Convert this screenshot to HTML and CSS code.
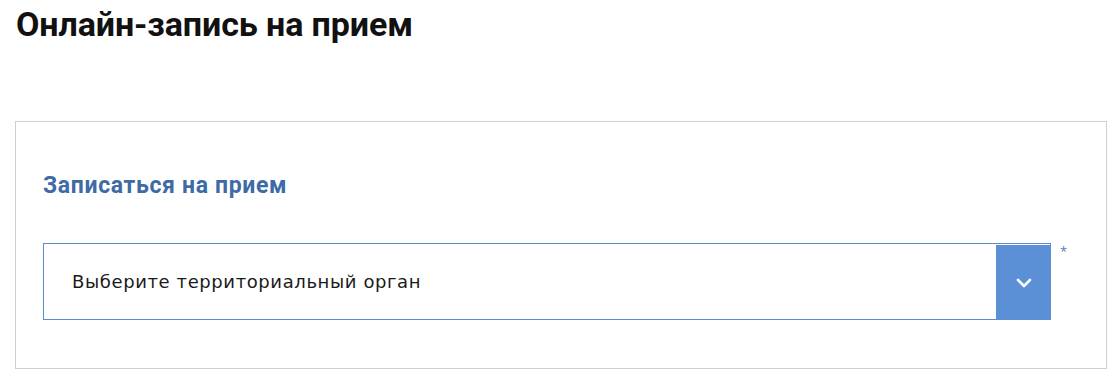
FILE: index.html
```html
<!DOCTYPE html>
<html lang="ru">
<head>
<meta charset="utf-8">
<link rel="stylesheet" href="styles.css">
</head>
<body>
<div class="page">
  <h1 class="title">Онлайн-запись на прием</h1>
  <section class="card">
    <h2 class="subtitle">Записаться на прием</h2>
    <div class="field">
      <div class="select">
        <span class="select-text">Выберите территориальный орган</span>
        <span class="select-btn">
          <svg width="16" height="10" viewBox="0 0 16 10"><path d="M2 2 L8 8 L14 2" fill="none" stroke="#fff" stroke-width="2.6" stroke-linecap="round" stroke-linejoin="round"/></svg>
        </span>
      </div>
      <span class="req">*</span>
    </div>
  </section>
</div>
</body>
</html>
```
FILE: styles.css
```css
html, body { margin: 0; padding: 0; background: #fff; }
.page {
  padding: 0 9px 0 15px;
  font-family: "Open Sans", "DejaVu Sans", sans-serif;
}
.title {
  margin: 0;
  padding-top: 3px;
  font-family: "Roboto", "Liberation Sans", sans-serif;
  font-weight: 700;
  font-size: 34px;
  line-height: 43px;
  color: #111;
  padding-left: 1px;
  letter-spacing: -0.1px;
}
.card {
  margin-top: 75px;
  border: 1px solid #cfcfcf;
  height: 248px;
  box-sizing: border-box;
  padding: 49px 0 0 27px;
}
.subtitle {
  margin: 0;
  font-family: "Roboto", "Liberation Sans", sans-serif;
  font-weight: 700;
  font-size: 23px;
  line-height: 29px;
  letter-spacing: 0.65px;
  color: #3e6aa5;
}
.field {
  display: flex;
  align-items: flex-start;
  margin-top: 43px;
}
.select {
  position: relative;
  width: 1008px;
  height: 77px;
  box-sizing: border-box;
  border: 1px solid #5b8bd0;
  display: flex;
  align-items: center;
  padding-left: 28px;
}
.select-text {
  font-family: "DejaVu Sans", sans-serif;
  font-size: 18px;
  color: #1a1a1a;
  letter-spacing: 0.6px;
}
.select-btn {
  position: absolute;
  right: -1px;
  top: 1px;
  bottom: -1px;
  width: 55px;
  background: #5b8fd6;
  display: flex;
  align-items: center;
  justify-content: center;
}
.req {
  margin-left: 9px;
  margin-top: -1px;
  font-size: 13px;
  color: #4e7fb5;
}
```
